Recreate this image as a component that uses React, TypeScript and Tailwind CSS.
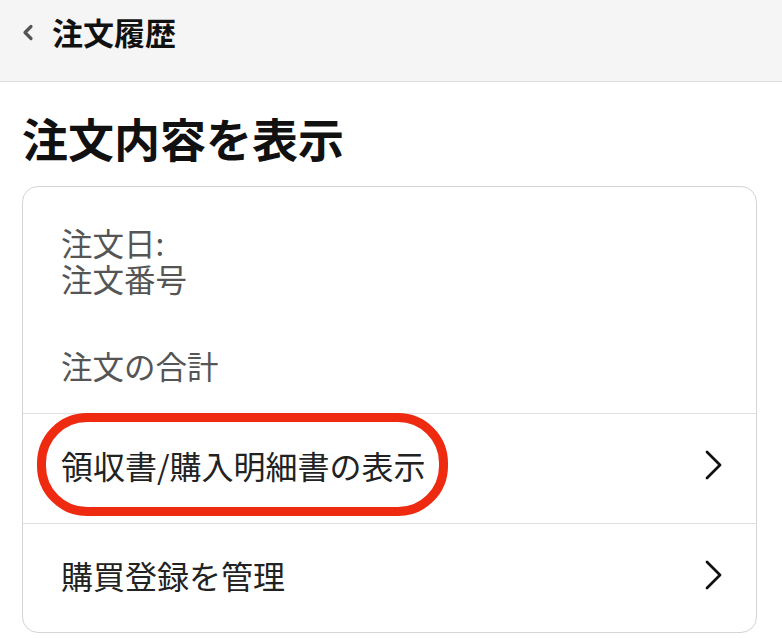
export default function App() {
  const font = { fontFamily: '"Noto Sans CJK JP", "Noto Sans", sans-serif' }
  return (
    <div className="min-h-screen bg-white" style={font}>
      <header className="flex h-[82px] items-center border-b border-[#dcdcdc] bg-[#f5f5f5] pl-[22px]">
        <svg width="12" height="17" viewBox="0 0 12 17" className="mr-[18px] mt-[-16px]">
          <path d="M9 2.5 L3 8.5 L9 14.5" fill="none" stroke="#555" strokeWidth="3.2" strokeLinecap="round" strokeLinejoin="round" />
        </svg>
        <span className="mt-[-18px] text-[31px] font-bold leading-none text-[#111]">注文履歴</span>
      </header>

      <h1 className="ml-[22px] mt-[30px] text-[46px] font-bold leading-[50px] text-[#111]">注文内容を表示</h1>

      <div className="ml-[22px] mr-[25px] mt-[24px] rounded-[16px] border border-[#d4d4d4]">
        <div className="border-b border-[#e0e0e0] pb-[30px] pl-[38px] pt-[37px] text-[31.5px] leading-[36px] text-[#555]">
          <div>注文日:</div>
          <div>注文番号</div>
          <div className="mt-[51px]">注文の合計</div>
        </div>

        <div className="relative flex h-[110px] items-center justify-between border-b border-[#e0e0e0] pb-[8px] pl-[38px] pr-[32px]">
          <span className="text-[32px] text-[#222]">領収書/購入明細書の表示</span>
          <Chevron />
          <div className="pointer-events-none absolute left-[14px] top-[-1px] h-[103px] w-[411px] rounded-[50px] border-[9px] border-[#ee2a10]" />
        </div>

        <div className="flex h-[108px] items-center justify-between pb-[6px] pl-[38px] pr-[32px]">
          <span className="text-[32px] text-[#222]">購買登録を管理</span>
          <Chevron />
        </div>
      </div>
    </div>
  )
}

function Chevron() {
  return (
    <svg width="20" height="32" viewBox="0 0 20 32">
      <path d="M3 3 L16 16 L3 29" fill="none" stroke="#111" strokeWidth="2.8" strokeLinecap="round" strokeLinejoin="round" />
    </svg>
  )
}
